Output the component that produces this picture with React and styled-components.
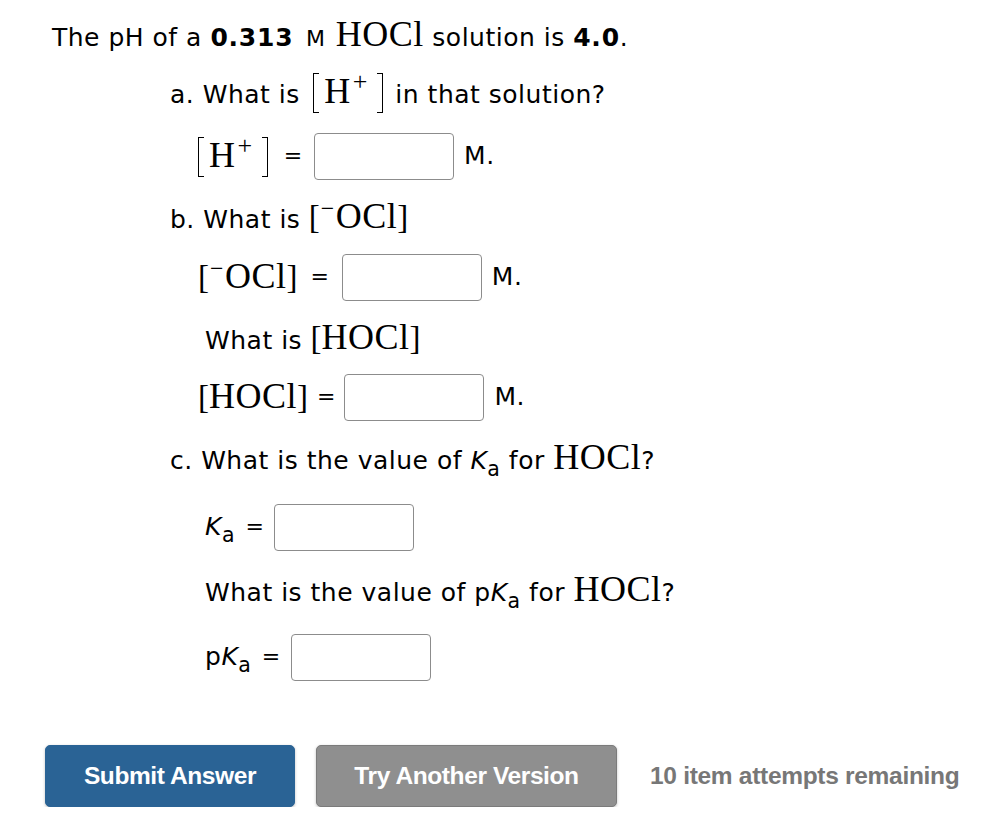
import React from 'react';
import styled, { createGlobalStyle } from 'styled-components';

const Global = createGlobalStyle`
  html, body { margin: 0; padding: 0; background: #fff; }
  body { font-family: "DejaVu Sans", Verdana, sans-serif; color: #000; }
`;

const Page = styled.div`
  padding-top: 10px;
`;

const Question = styled.div`
  padding-left: 52px;
  font-size: 25px;
  letter-spacing: 0.5px;
`;

const Line = styled.div`
  display: flex;
  align-items: center;
  height: ${p => p.$h}px;
  padding-left: ${p => p.$indent || 0}px;
  white-space: nowrap;
`;

const Text = styled.span`
  display: inline-block;
`;

const B = styled.b`
  font-weight: bold;
  letter-spacing: 0.8px;
`;

const Unit = styled.span`
  font-size: 22px;
  margin: 0 2px 0 4px;
`;

const MathT = styled.span`
  font-family: "Liberation Serif", "DejaVu Serif", serif;
  font-size: 36px;
  letter-spacing: 0.5px;
`;

const Sup = styled.span`
  font-size: ${p => (p.$plus ? '0.72em' : '0.66em')};
  vertical-align: 0.5em;
  line-height: 0;
  margin: 0 ${p => (p.$plus ? 4 : 1)}px 0 ${p => (p.$plus ? 2 : 1)}px;
`;

const Bracket = styled.span`
  font-family: "Liberation Serif", "DejaVu Serif", serif;
  font-size: 33px;
  letter-spacing: 0;
`;

const TallBracket = styled.span`
  display: inline-block;
  width: 6px;
  height: 40px;
  box-sizing: border-box;
  border: 1.6px solid #000;
  ${p =>
    p.$right
      ? 'border-left: none; margin-left: 5px; margin-right: 4px;'
      : 'border-right: none; margin-right: 5px; margin-left: 5px;'}
  vertical-align: -10px;
`;

const Ital = styled.i`
  font-style: italic;
`;

const Sub = styled.span`
  font-size: 0.82em;
  vertical-align: -0.32em;
  line-height: 0;
`;

const Eq = styled.span`
  margin: 0 ${p => p.$gap || 11}px;
  font-size: 22px;
  letter-spacing: 0;
`;

const Box = styled.input`
  box-sizing: border-box;
  width: 140px;
  height: 47px;
  border: 1.5px solid #8c8c8c;
  border-radius: 4px;
  background: #fff;
  margin: 2px 0 0 0;
  outline: none;
`;

const After = styled.span`
  margin-left: 10px;
`;

const Buttons = styled.div`
  display: flex;
  align-items: center;
  margin-top: 48px;
  padding-left: 45px;
  font-family: "Liberation Sans", Arial, sans-serif;
  font-weight: bold;
  font-size: 24.5px;
`;

const Button = styled.button`
  box-sizing: border-box;
  width: ${p => p.$w}px;
  height: 62px;
  border-radius: 5px;
  border: 1.5px solid ${p => (p.$gray ? '#7b7b7b' : '#2a6395')};
  background: ${p => (p.$gray ? '#8f8f8f' : '#2a6395')};
  color: #fff;
  font: inherit;
  letter-spacing: -0.4px;
  box-shadow: 0 1px 3px rgba(0, 0, 0, 0.25);
  margin-right: ${p => p.$mr}px;
  cursor: pointer;
`;

const Remaining = styled.span`
  color: #777;
  letter-spacing: -0.3px;
`;

const HPlus = () => (
  <>
    <TallBracket />
    <MathT>H<Sup $plus>+</Sup></MathT>
    <TallBracket $right />
  </>
);

const OCl = () => (
  <>
    <Bracket>[</Bracket>
    <MathT><Sup>−</Sup>OCl</MathT>
    <Bracket>]</Bracket>
  </>
);

const HOCl = () => (
  <>
    <Bracket>[</Bracket>
    <MathT>HOCl</MathT>
    <Bracket>]</Bracket>
  </>
);

const Ka = () => (
  <>
    <Ital>K</Ital>
    <Sub>a</Sub>
  </>
);

export default function App() {
  return (
    <>
      <Global />
      <Page>
        <Question>
          <Line $h={48}>
            <Text>
              The pH of a <B>0.313</B> <Unit>M</Unit> <MathT>HOCl</MathT> solution is <B>4.0</B>.
            </Text>
          </Line>
          <Line $h={66} $indent={118}>
            <Text>
              a. What is <HPlus /> in that solution?
            </Text>
          </Line>
          <Line $h={63} $indent={141}>
            <Text><HPlus /></Text>
            <Eq $gap={12}>=</Eq>
            <Box />
            <After>M.</After>
          </Line>
          <Line $h={58} $indent={118}>
            <Text>
              b. What is <OCl />
            </Text>
          </Line>
          <Line $h={62} $indent={146}>
            <Text><OCl /></Text>
            <Eq $gap={13}>=</Eq>
            <Box />
            <After>M.</After>
          </Line>
          <Line $h={60} $indent={153}>
            <Text>
              What is <HOCl />
            </Text>
          </Line>
          <Line $h={58} $indent={146}>
            <Text><HOCl /></Text>
            <Eq $gap={9}>=</Eq>
            <Box />
            <After>M.</After>
          </Line>
          <Line $h={64} $indent={118}>
            <Text>
              c. What is the value of <Ka /> for <MathT>HOCl</MathT>?
            </Text>
          </Line>
          <Line $h={74} $indent={153}>
            <Text><Ka /></Text>
            <Eq $gap={10.5}>=</Eq>
            <Box />
          </Line>
          <Line $h={52} $indent={153}>
            <Text>
              What is the value of p<Ka /> for <MathT>HOCl</MathT>?
            </Text>
          </Line>
          <Line $h={82} $indent={153}>
            <Text>p<Ka /></Text>
            <Eq $gap={10.5}>=</Eq>
            <Box />
          </Line>
        </Question>
        <Buttons>
          <Button $w={250} $mr={21}>Submit Answer</Button>
          <Button $w={301} $mr={33} $gray>Try Another Version</Button>
          <Remaining>10 item attempts remaining</Remaining>
        </Buttons>
      </Page>
    </>
  );
}
